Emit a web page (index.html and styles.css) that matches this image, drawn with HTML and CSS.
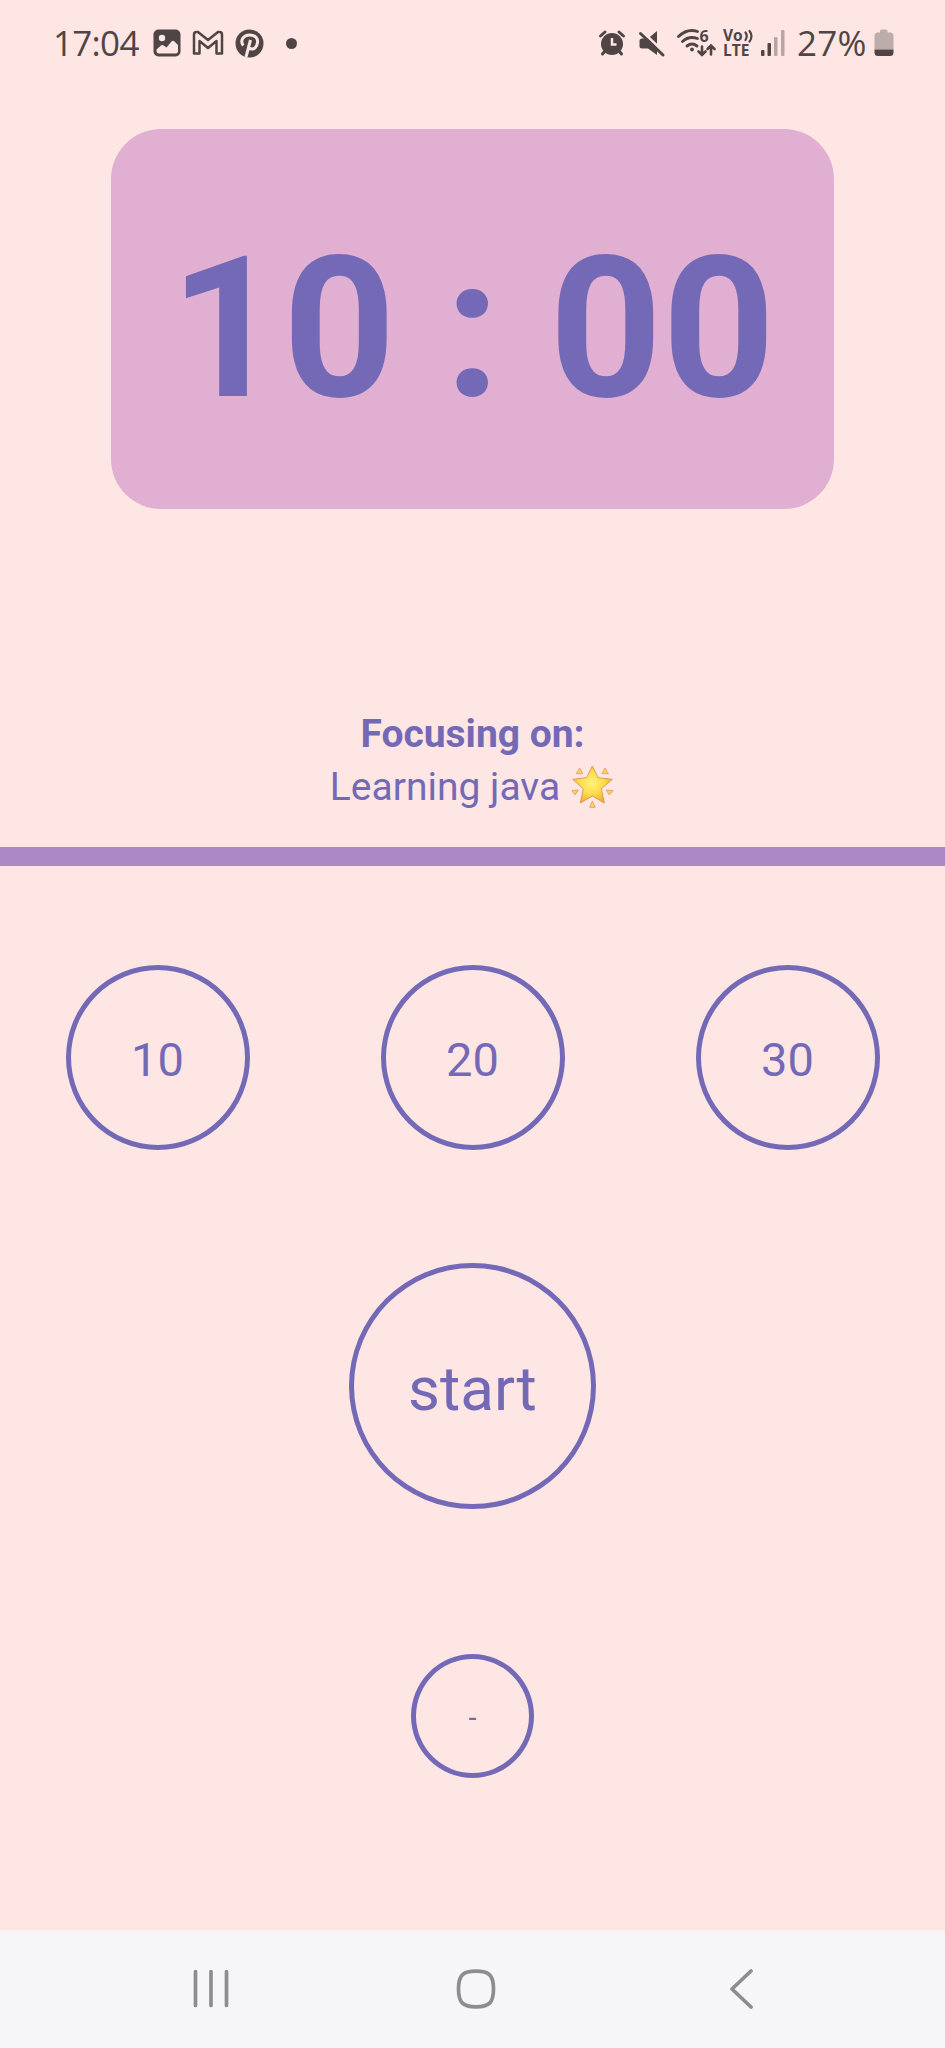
FILE: index.html
```html
<!DOCTYPE html>
<html lang="en">
<head>
<meta charset="utf-8">
<title>Focus timer</title>
<link rel="stylesheet" href="styles.css">
</head>
<body>
<div class="screen">
  <header class="status">
    <div class="status-left">
      <span class="clock">17:04</span>
      <svg class="ic-photo" width="28" height="28" viewBox="0 0 28 28"><rect x=".5" y=".5" width="27" height="27" rx="5" fill="currentColor"/><circle cx="9" cy="9" r="3.200" class="cut"/><path class="cut" d="M3.500 20.500L8 16.500Q9.500 15.500 11 16.800L13.500 18.500L18.500 12.500Q20 11 21.500 12.500L25 16V22Q25 24.500 22.500 24.500H6Q3.500 24.500 3.500 21.500Z"/></svg>
      <svg class="ic-mail" width="32" height="26" viewBox="0 0 32 26"><path d="M2 23.500V4.500Q2 2 4.500 2H6L16 10L26 2H27.500Q30 2 30 4.500V23.500H24.500V11L16 18L7.500 11V23.500Z" fill="none" stroke="currentColor" stroke-width="2.500" stroke-linejoin="round"/></svg>
      <svg class="ic-pin" width="29" height="29" viewBox="0 0 29 29"><circle cx="14.500" cy="14.500" r="14" fill="currentColor"/><path class="cut-line" d="M8.300 16.500C4.500 11.500 8.500 6 14.800 6C20.500 6 23 9.500 22.500 13.500C22 18 19 20.500 16.500 20C14.300 19.600 13.500 18.500 13.700 17M15.500 11L11 28"/></svg>
      <span class="dot"></span>
    </div>
    <div class="status-right">
      <svg width="28" height="28" viewBox="0 0 28 28"><circle cx="14" cy="15" r="11" fill="currentColor"/><path d="M2.500 7L7 3M25.500 7L21 3M6.500 22.500L4.500 25M21.500 22.500L23.500 25" stroke="currentColor" stroke-width="3" stroke-linecap="round"/><path d="M14 9V15.500H18.500" fill="none" class="cut-stroke"/></svg>
      <svg class="ic-mute" width="28" height="28" viewBox="0 0 28 28"><path d="M5 9.500H11L20 2V26L11 19.500H5Q2.500 19.500 2.500 17V12Q2.500 9.500 5 9.500Z" fill="currentColor"/><path d="M4 1L27 23.500" class="cut-stroke"/><path d="M3.500 4.500L26 26" stroke="currentColor" stroke-width="3" stroke-linecap="round"/></svg>
      <svg class="ic-wifi" width="40" height="30" viewBox="0 0 40 30"><g fill="none" stroke="currentColor" stroke-width="2.900" stroke-linecap="round"><path d="M2.500 8.500Q11.500 0 21.500 3.500"/><path d="M6.500 13.500Q13 7.500 21.500 10.500"/><path d="M11 18Q16 14 21 18"/><path stroke-width="2.600" d="M26 18.500V26.500M22.500 23.500L26 27L29.500 23.500M35 26.500V18M31.500 21L35 17.500L38.500 21"/></g><circle cx="16" cy="21.500" r="1.900" fill="currentColor"/><text x="23.500" y="13.500" class="six">6</text></svg>
      <div class="lte">
        <div class="lte-line">Vo<svg width="10" height="12" viewBox="0 0 10 12"><path d="M1.500 2.500Q4 6 1.500 10M5.500 1Q9.500 6 5.500 11.500" fill="none" stroke="currentColor" stroke-width="2.200" stroke-linecap="round"/></svg></div>
        <div class="lte-line">LTE</div>
      </div>
      <svg class="ic-signal" width="24" height="27" viewBox="0 0 24 27"><g fill="currentColor"><rect x="0" y="20" width="3.500" height="6" rx="1"/><rect x="6.500" y="13" width="3.500" height="13" rx="1"/><g opacity=".4"><rect x="13" y="7" width="3.500" height="19" rx="1"/><rect x="20" y="0" width="3.500" height="26" rx="1"/></g></g></svg>
      <span class="percent">27%</span>
      <svg class="ic-battery" width="20" height="28" viewBox="0 0 20 28"><path d="M6 2Q6 .5 7.500 .5H12Q13.500 .5 13.500 2V3.500H16Q19.500 3.500 19.500 7V20.500H.5V7Q.5 3.500 4 3.500H6Z" fill="#bcacac"/><path d="M.5 20.500H19.500V23.500Q19.500 27 16 27H4Q.5 27 .5 23.500Z" fill="currentColor"/></svg>
    </div>
  </header>

  <main class="main">
    <section class="timer">10 : 00</section>
    <section class="focus">
      <div class="focus-title">Focusing on:</div>
      <div class="focus-task">Learning java
        <svg class="star" role="img" aria-label="🌟" width="45" height="45" viewBox="16 15 135 135">
          <defs>
            <radialGradient id="gold" cx=".47" cy=".45" r=".6"><stop offset="0" stop-color="#fff27c"/><stop offset=".5" stop-color="#fddc4d"/><stop offset="1" stop-color="#eda33a"/></radialGradient>
          </defs>
          <path d="M83 21L100 56L143 61L110 89L119 132L83 111L47 132L56 89L24 61L66 56Z" fill="url(#gold)" stroke="#dfa04a" stroke-width="3" stroke-linejoin="round"/>
          <g fill="#fbd06c" stroke="#e6aa5c" stroke-width="3" stroke-linejoin="round"><path d="M45 27L54 44L35 44Z"/><path d="M121 27L131 44L112 44Z"/><path d="M22 95L41 93L31 108Z"/><path d="M125 93L145 95L134 108Z"/><path d="M83 127L92 145H75Z"/></g>
        </svg>
      </div>
    </section>
    <div class="divider"></div>
    <div class="presets">
      <button class="round preset">10</button>
      <button class="round preset">20</button>
      <button class="round preset">30</button>
    </div>
    <button class="round start">start</button>
    <button class="round minus">-</button>
  </main>

  <nav class="nav">
    <svg width="40" height="40" viewBox="0 0 40 40"><path d="M4.500 2.500V36.500M20 2.500V36.500M35.500 2.500V36.500"/></svg>
    <svg width="40" height="40" viewBox="0 0 40 40"><path d="M20 2.200C33 2.200 37.500 6 37.500 20C37.500 34 33 37.800 20 37.800C7 37.800 2.500 34 2.500 20C2.500 6 7 2.200 20 2.200Z"/></svg>
    <svg width="40" height="40" viewBox="0 0 40 40"><path d="M30 2L11 20L30 38"/></svg>
  </nav>
</div>
</body>
</html>
```

FILE: styles.css
```css
* { box-sizing: border-box; }
body { margin: 0; background: #fee6e5; }
.screen {
  width: 945px;
  height: 2048px;
  display: flex;
  flex-direction: column;
  background: #fee6e5;
  color: #7469b6;
  font-family: Roboto, sans-serif;
  overflow: hidden;
}

.status {
  height: 86px;
  padding: 0 51px 0 53px;
  display: flex;
  justify-content: space-between;
  align-items: center;
  color: #4f4544;
}
.status-left, .status-right { display: flex; align-items: center; }
.status svg { display: block; flex: none; overflow: visible; }
.clock, .percent { font: 400 35px/48px "Open Sans", sans-serif; }
.clock { width: 100px; white-space: nowrap; letter-spacing: -0.7px; }
.ic-mail { margin-left: 11px; }
.ic-pin { margin-left: 11px; }
.dot { width: 11px; height: 11px; margin-left: 22px; border-radius: 50%; background: currentColor; }
.cut { fill: #fee6e5; }
.cut-stroke { stroke: #fee6e5; stroke-width: 2.500px; }
.cut-line { fill: none; stroke: #fee6e5; stroke-width: 3px; }
.ic-mute { margin-left: 11px; }
.ic-wifi { margin-left: 11px; }
.lte { width: 31px; margin-left: 7px; font: 700 15.500px/15px "Open Sans", sans-serif; }
.lte-line { height: 15px; display: flex; align-items: center; gap: 1px; }
.ic-signal { margin-left: 7px; }
.percent { margin-left: 12px; width: 77px; white-space: nowrap; letter-spacing: 0.3px; }
.six { font: 700 16px "Open Sans", sans-serif; fill: currentColor; }

.main { flex: 1; display: flex; flex-direction: column; align-items: center; }
.timer {
  width: 723px;
  height: 380px;
  margin-top: 43px;
  padding-top: 84px;
  border-radius: 50px;
  background: #e1afd1;
  font-size: 197px;
  font-weight: 700;
  line-height: 231px;
  text-align: center;
  white-space: pre;
}
.focus {
  height: 338px;
  padding-top: 199px;
  font-size: 39px;
  line-height: 53px;
  text-align: center;
}
.focus-title { font-weight: 700; }
.focus-task { display: flex; justify-content: center; align-items: center; gap: 10px; }
.star { display: block; margin-top: -2px; }
.divider { width: 100%; height: 19px; background: #ad88c6; }
.presets { width: 100%; margin-top: 99px; display: grid; grid-template-columns: repeat(3, 1fr); justify-items: center; }
.round {
  display: flex;
  align-items: center;
  justify-content: center;
  padding: 0;
  border: 5px solid #7469b6;
  border-radius: 50%;
  background: none;
  color: inherit;
  font-family: inherit;
}
.preset { width: 184px; height: 185px; padding-top: 3px; font-size: 47px; }
.start { width: 247px; height: 246px; margin-top: 113px; padding-top: 4px; font-size: 62px; }
.minus { width: 123px; height: 124px; margin-top: 145px; padding-top: 4px; font-size: 29px; }

.nav {
  height: 118px;
  padding: 0 184px 0 191px;
  display: flex;
  justify-content: space-between;
  align-items: center;
  background: #f6f6f8;
}
.nav svg { fill: none; stroke: #8d8d8f; stroke-width: 3.700px; stroke-linecap: round; stroke-linejoin: round; }
```
